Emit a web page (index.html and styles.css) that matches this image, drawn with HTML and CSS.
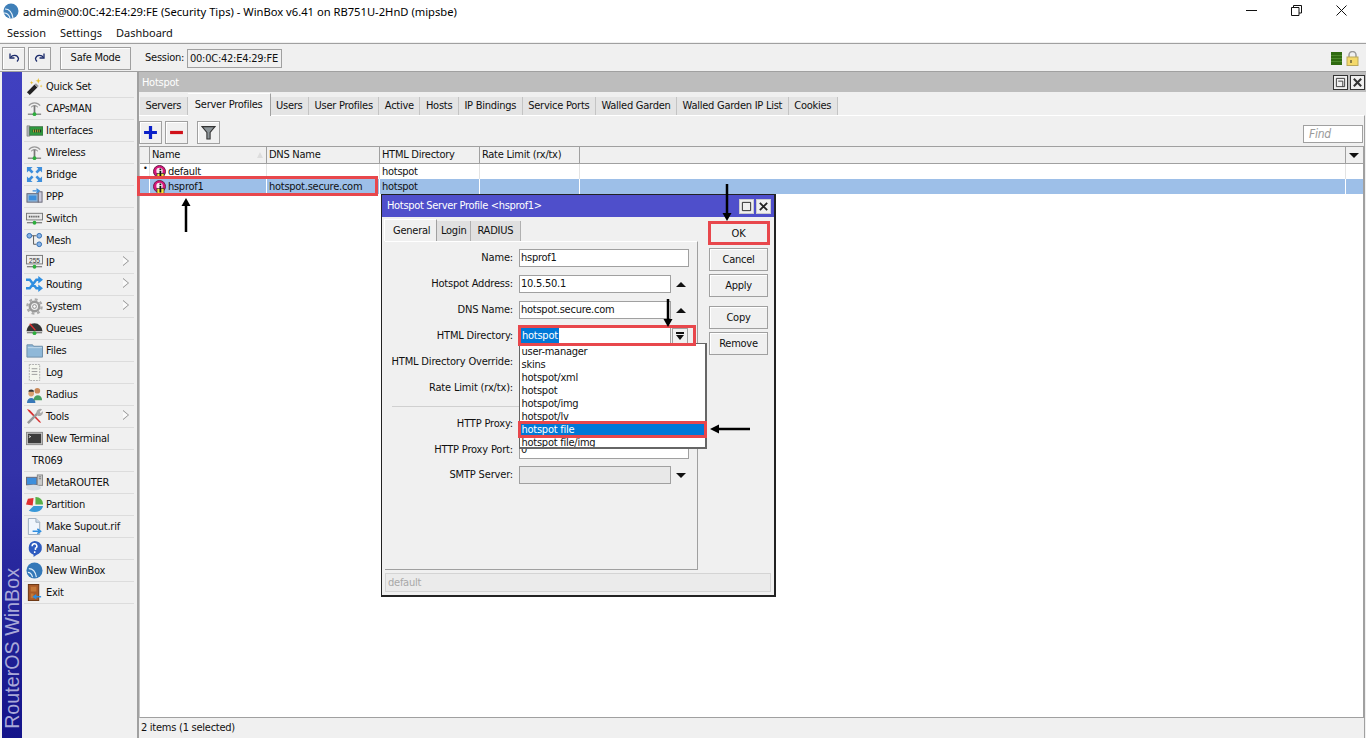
FILE: index.html
```html
<!DOCTYPE html>
<html lang="en">
<head>
<meta charset="utf-8">
<title>WinBox</title>
<link rel="stylesheet" href="styles.css">
</head>
<body>
<svg class="defs" width="0" height="0" aria-hidden="true">
  <defs>
    <symbol id="pin" viewBox="0 0 14 14">
      <circle cx="6.500" cy="6.500" r="6" fill="#d8147a" stroke="#6a2048" stroke-width="1"/>
      <circle cx="6.500" cy="6" r="3.200" fill="#fbe8f2"/>
      <rect x="4" y="8.500" width="7" height="5" fill="#f7e53a" stroke="#333" stroke-width=".7"/>
      <path d="M6.500 3.500h1.800v1.800H6.500zM6.500 6h1.800v6.500H6.500z" fill="#111"/>
    </symbol>
    <symbol id="antenna" viewBox="0 0 18 18">
      <path d="M3 6c3-4 9-4 12 0" stroke="#9a9a9a" fill="none" stroke-width="1.200"/>
      <path d="M5.500 7.500c2-2 5-2 7 0" stroke="#777" fill="none"/>
      <path d="M9 6v8" stroke="#777" stroke-width="1.800"/>
      <path d="M2 15h14" stroke="#555"/>
      <circle cx="9" cy="15" r="2" fill="#2cae3c"/>
    </symbol>
  </defs>
</svg>

<header class="titlebar">
  <svg class="app-icon" viewBox="0 0 16 16"><circle cx="8" cy="8" r="7.500" fill="#3f7fb8"/><path d="M2 6c4 0 7 3 8 9M1 10c3 0 5 2 6 5" stroke="#e8f2fa" stroke-width="1.200" fill="none"/></svg>
  <span class="title-text">admin@00:0C:42:E4:29:FE (Security Tips) - WinBox v6.41 on RB751U-2HnD (mipsbe)</span>
  <div class="win-controls">
    <svg viewBox="0 0 11 11"><path d="M0 5.500h11" stroke="#111"/></svg>
    <svg viewBox="0 0 11 11"><path d="M.5 2.500h7.500v8H.5zM2.500 2.500V.5h8v7.500H8" stroke="#111" fill="none"/></svg>
    <svg viewBox="0 0 11 11"><path d="M.5.5l10 10M10.500.5l-10 10" stroke="#111"/></svg>
  </div>
</header>

<nav class="menubar"><span>Session</span><span>Settings</span><span>Dashboard</span></nav>

<div class="toolbar">
  <button class="btn btn-icon"><svg viewBox="0 0 14 14"><path d="M3 2.500v4.500h4.500" stroke="#1a2a6a" stroke-width="1.300" fill="none"/><path d="M3.500 6.500c2-3 7-3 8 1 0 1-.5 2-1.500 3" stroke="#1a2a6a" stroke-width="1.300" fill="none"/></svg></button>
  <button class="btn btn-icon"><svg viewBox="0 0 14 14"><path d="M11 2.500v4.500H6.500" stroke="#1a2a6a" stroke-width="1.300" fill="none"/><path d="M10.500 6.500c-2-3-7-3-8 1 0 1 .5 2 1.500 3" stroke="#1a2a6a" stroke-width="1.300" fill="none"/></svg></button>
  <button class="btn btn-safe">Safe Mode</button>
  <span class="session-label">Session:</span>
  <span class="session-value">00:0C:42:E4:29:FE</span>
  <div class="status-icons">
    <svg width="11" height="13" viewBox="0 0 11 13"><rect width="11" height="13" fill="#2f6a10"/><path d="M0 3.500h11M0 6.500h11M0 9.500h11" stroke="#4c8a2c"/></svg>
    <svg width="13" height="15" viewBox="0 0 13 15"><path d="M3 7V4a3.500 3.500 0 0 1 7 0v3" stroke="#999" stroke-width="1.500" fill="none"/><rect x="1" y="6" width="11" height="8.500" fill="#f4d96a" stroke="#b9a75a"/><path d="M5 9v3" stroke="#222"/></svg>
  </div>
</div>

<main class="workspace">
  <div class="brand"><span>RouterOS WinBox</span></div>

  <aside class="sidemenu">
    <div class="mi"><svg viewBox="0 0 18 18"><path d="M1 15l8-8 3 3-8 8z" fill="#222"/><path d="M9 7l3 3 1.500-1.500-3-3z" fill="#999"/><path d="M13 0l.8 2.500L16 3l-2.200.8L13 6l-.8-2.200L10 3l2.200-.5zM6 3l.5 1.500L8 5l-1.500.5L6 7l-.5-1.500L4 5l1.500-.5zM16 7l.4 1.200 1.200.3-1.200.4L16 10l-.4-1.100-1.100-.4 1.100-.3z" fill="#e8c030"/></svg><span>Quick Set</span></div>
    <div class="mi"><svg><use href="#antenna"/></svg><span>CAPsMAN</span></div>
    <div class="mi"><svg viewBox="0 0 18 18"><path d="M1 4h3v11H1z" fill="#aab0b4" stroke="#777" stroke-width=".6"/><rect x="4" y="5" width="14" height="9" fill="#2e9a3e" stroke="#37683c" stroke-width=".8"/><path d="M7 8h9v3H7z" fill="#1c3a20"/><path d="M8 8v3M10 8v3M12 8v3M14 8v3" stroke="#e8c840" stroke-width=".8"/></svg><span>Interfaces</span></div>
    <div class="mi"><svg><use href="#antenna"/></svg><span>Wireless</span></div>
    <div class="mi"><svg viewBox="0 0 18 18"><path d="M1 1h6L5 3l3 3-2 2-3-3-2 2zM17 1v6l-2-2-3 3-2-2 3-3-2-2zM1 17v-6l2 2 3-3 2 2-3 3 2 2zM17 17h-6l2-2-3-3 2-2 3 3 2-2z" fill="#3d8edc"/></svg><span>Bridge</span></div>
    <div class="mi"><svg viewBox="0 0 18 18"><rect x="1" y="6" width="12" height="9" fill="#8db4d8" stroke="#667"/><path d="M3 8h8v5H3z" fill="#3d8edc"/><rect x="13" y="4" width="4" height="11" fill="#ccd" stroke="#667"/><path d="M7 3h6M11 .8L14 3l-3 2.200" stroke="#3d8edc" fill="none" stroke-width="1.300"/></svg><span>PPP</span></div>
    <div class="mi"><svg viewBox="0 0 18 18"><rect x=".5" y="3.500" width="17" height="7" fill="#e8e8e8" stroke="#777"/><path d="M3 7h12" stroke="#333" stroke-dasharray="1 1" stroke-width="2"/><path d="M1 13.500h16" stroke="#555"/><circle cx="9" cy="13.500" r="2" fill="#2cae3c"/></svg><span>Switch</span></div>
    <div class="mi"><svg viewBox="0 0 18 18"><path d="M6 4h5M8 4v9h3" stroke="#555" fill="none"/><circle cx="3.500" cy="4" r="2.500" fill="#8ab4e4" stroke="#2f6ab0"/><circle cx="14" cy="4" r="2.500" fill="#8ab4e4" stroke="#2f6ab0"/><circle cx="14" cy="13" r="2.500" fill="#8ab4e4" stroke="#2f6ab0"/></svg><span>Mesh</span></div>
    <div class="mi arrow"><svg viewBox="0 0 18 18"><rect x=".5" y="1.500" width="17" height="9" fill="#eee" stroke="#777"/><text class="ip-num" x="9" y="9" text-anchor="middle">255</text><path d="M1 13.500h16" stroke="#555"/><circle cx="9" cy="13.500" r="2" fill="#2cae3c"/></svg><span>IP</span></div>
    <div class="mi arrow"><svg viewBox="0 0 18 18"><path d="M0 4h4l7 9h3M0 13h4l7-9h3" stroke="#2f8ee0" stroke-width="2.600" fill="none"/><path d="M13 0l5 4-5 4zM13 9l5 4-5 4z" fill="#2f8ee0"/></svg><span>Routing</span></div>
    <div class="mi arrow"><svg viewBox="0 0 18 18"><circle cx="9" cy="9" r="5" fill="#eee" stroke="#999" stroke-width="2.500"/><circle cx="9" cy="9" r="7.500" fill="none" stroke="#aaa" stroke-width="2.500" stroke-dasharray="3 2.900"/><circle cx="9" cy="9" r="2" fill="#f8f8f8" stroke="#888"/></svg><span>System</span></div>
    <div class="mi"><svg viewBox="0 0 18 18"><path d="M.5 12a8.500 8.500 0 0 1 17 0z" fill="#333"/><path d="M4 4l6 7" stroke="#e03030" stroke-width="1.500"/><path d="M1 13.500h16" stroke="#555"/><circle cx="9" cy="14" r="2" fill="#2cae3c"/></svg><span>Queues</span></div>
    <div class="mi"><svg viewBox="0 0 18 18"><path d="M1 3h6l1 1.500h9.500V16H1z" fill="#8fb8d8" stroke="#6a8ca8"/><path d="M2 6h15" stroke="#c4dcec"/></svg><span>Files</span></div>
    <div class="mi"><svg viewBox="0 0 18 18"><rect x="3.500" y=".5" width="11" height="17" fill="#f4f6ee" stroke="#aaa" stroke-dasharray="2 1"/><path d="M6 5h6M6 8h6M6 11h6" stroke="#9a9a9a"/></svg><span>Log</span></div>
    <div class="mi"><svg viewBox="0 0 18 18"><circle cx="5.500" cy="8" r="3" fill="#d8a070"/><path d="M1 18c0-7 9-7 9 0z" fill="#3878b8"/><circle cx="12" cy="5" r="3" fill="#c88858"/><path d="M2.500 6c0-3 6-3 6 0z" fill="#333"/><path d="M8 15c0-7 9-7 9 0z" fill="#48a060"/></svg><span>Radius</span></div>
    <div class="mi arrow"><svg viewBox="0 0 18 18"><path d="M1 1l3 1 11 12 1 2-2-1L3 4z" fill="#d83030"/><path d="M2 16L13 5" stroke="#999" stroke-width="2.600"/><path d="M11 5a4 4 0 0 1 6-3.500L14.500 4l1 1.500 2.300-2A4 4 0 0 1 12 8z" fill="#aaa"/></svg><span>Tools</span></div>
    <div class="mi"><svg viewBox="0 0 18 18"><rect x=".5" y="2.500" width="17" height="13" fill="#c8c8c8" stroke="#888"/><rect x="2" y="4" width="14" height="10" fill="#3c3c3c"/><path d="M3 6l2 1-2 1" stroke="#fff" fill="none" stroke-width=".8"/></svg><span>New Terminal</span></div>
    <div class="mi mi-plain"><span>TR069</span></div>
    <div class="mi"><svg viewBox="0 0 18 18"><rect x=".5" y="3.500" width="11" height="8" fill="#3d8edc" stroke="#667"/><rect x="12" y="1" width="5.500" height="11" fill="#ccc" stroke="#888"/><path d="M13.500 3h2.500M13.500 5h2.500" stroke="#777"/><ellipse cx="8" cy="14.500" rx="8" ry="3" fill="#d8dde4"/></svg><span>MetaROUTER</span></div>
    <div class="mi"><svg viewBox="0 0 18 18"><path d="M8 2L2 3 0 9l7 1z" fill="#e03030"/><path d="M10 1a7.500 7.500 0 0 1 8 8h-8z" fill="#58b048"/><path d="M8 10.500h10c-1 6-8 8-15 5z" fill="#3898d8"/></svg><span>Partition</span></div>
    <div class="mi"><svg viewBox="0 0 18 18"><path d="M2.500.5h8l4 4v13h-12z" fill="#f0f6fc" stroke="#9ab"/><path d="M10.500.5v4h4" fill="#cde" stroke="#9ab"/><path d="M7 14h7M12 11.500l3.500 2.500-3.500 2.500" stroke="#2f8ee0" stroke-width="1.500" fill="none"/></svg><span>Make Supout.rif</span></div>
    <div class="mi"><svg viewBox="0 0 18 18"><path d="M9 1a7.500 7.500 0 0 1 2 14.800L8 18v-2.500A7.500 7.500 0 0 1 9 1z" fill="#2e5cc0"/><path d="M6.500 6.500a2.500 2.500 0 1 1 3.500 2.300V10.500M9.200 12v1.800" stroke="#fff" stroke-width="1.600" fill="none"/></svg><span>Manual</span></div>
    <div class="mi"><svg viewBox="0 0 18 18"><circle cx="9" cy="9" r="8.500" fill="#3478b8"/><path d="M3 7c4 0 7 3 8 9M2 11c3 0 4 2 5 5" stroke="#dfeefa" stroke-width="1.200" fill="none"/></svg><span>New WinBox</span></div>
    <div class="mi"><svg viewBox="0 0 18 18"><rect x="2.500" y=".5" width="11" height="17" fill="#a85a28" stroke="#6a3410"/><path d="M5 3h6v5H5zM5 10h3v5H5z" fill="#c47838"/><path d="M8 13.500h8M11 11.500l-3 2 3 2" stroke="#2f8ee0" stroke-width="1.500" fill="none"/></svg><span>Exit</span></div>
  </aside>

  <section class="panel">
    <div class="panel-title">
      <span>Hotspot</span>
      <div class="panel-controls">
        <i class="pc"><svg viewBox="0 0 12 12"><path d="M1.500 1.500h9v9h-9zM3.500 4.500h5v6" stroke="#333" fill="none"/></svg></i>
        <i class="pc"><svg viewBox="0 0 12 12"><path d="M2 2l8 8M10 2l-8 8" stroke="#333" stroke-width="2.200"/></svg></i>
      </div>
    </div>
    <div class="tabs">
      <span class="tab">Servers</span>
      <span class="tab active">Server Profiles</span>
      <span class="tab">Users</span>
      <span class="tab">User Profiles</span>
      <span class="tab">Active</span>
      <span class="tab">Hosts</span>
      <span class="tab">IP Bindings</span>
      <span class="tab">Service Ports</span>
      <span class="tab">Walled Garden</span>
      <span class="tab">Walled Garden IP List</span>
      <span class="tab">Cookies</span>
    </div>
    <div class="content">
      <div class="actions">
        <button class="btn btn-act"><svg viewBox="0 0 14 14"><path d="M7 1v12M1 7h12" stroke="#0a20c8" stroke-width="3"/></svg></button>
        <button class="btn btn-act"><svg viewBox="0 0 14 14"><path d="M1 7h12" stroke="#d01018" stroke-width="3"/></svg></button>
        <button class="btn btn-act btn-filter"><svg viewBox="0 0 14 14"><path d="M1 1.500h12L8.500 7v6h-3V7z" fill="#8c9498" stroke="#333"/></svg></button>
        <span class="find">Find</span>
      </div>
      <div class="table">
        <div class="row head">
          <span class="c0"></span>
          <span class="c1">Name<em class="sort"></em></span>
          <span class="c2">DNS Name</span>
          <span class="c3">HTML Directory</span>
          <span class="c4">Rate Limit (rx/tx)</span>
          <span class="c5"></span>
          <span class="c6"><em class="tri"></em></span>
        </div>
        <div class="row">
          <span class="c0 mark">•</span>
          <span class="c1"><svg class="pin"><use href="#pin"/></svg>default</span>
          <span class="c2"></span>
          <span class="c3">hotspot</span>
          <span class="c4"></span>
          <span class="c5"></span>
        </div>
        <div class="row selected">
          <span class="c0"></span>
          <span class="c1"><svg class="pin"><use href="#pin"/></svg>hsprof1</span>
          <span class="c2">hotspot.secure.com</span>
          <span class="c3">hotspot</span>
          <span class="c4"></span>
          <span class="c5"></span>
        </div>
      </div>
      <div class="status">2 items (1 selected)</div>
    </div>
  </section>
</main>

<section class="dialog">
  <div class="dlg-title">
    <span>Hotspot Server Profile &lt;hsprof1&gt;</span>
    <div class="dlg-controls">
      <i class="pc"><svg viewBox="0 0 12 12"><path d="M1.500 1.500h9v9h-9z" stroke="#222" fill="none"/></svg></i>
      <i class="pc"><svg viewBox="0 0 12 12"><path d="M2 2l8 8M10 2l-8 8" stroke="#222" stroke-width="2"/></svg></i>
    </div>
  </div>
  <div class="dlg-body">
    <div class="dlg-left">
      <div class="dlg-tabs">
        <span class="dtab active">General</span>
        <span class="dtab">Login</span>
        <span class="dtab">RADIUS</span>
      </div>
      <div class="form">
        <div class="frow"><label>Name:</label><span class="field wide">hsprof1</span></div>
        <div class="frow"><label>Hotspot Address:</label><span class="field">10.5.50.1</span><em class="up"></em></div>
        <div class="frow"><label>DNS Name:</label><span class="field">hotspot.secure.com</span><em class="up"></em></div>
        <div class="frow"><label>HTML Directory:</label><span class="field"><b class="sel">hotspot</b></span><span class="ddbtn"><em class="tri"></em></span></div>
        <div class="frow"><label>HTML Directory Override:</label></div>
        <div class="frow"><label>Rate Limit (rx/tx):</label></div>
        <hr class="sep">
        <div class="frow"><label>HTTP Proxy:</label></div>
        <div class="frow tight"><label>HTTP Proxy Port:</label><span class="field wide">0</span></div>
        <div class="frow"><label>SMTP Server:</label><span class="field disabled"></span><em class="down"></em></div>
      </div>
    </div>
    <div class="dlg-buttons">
      <button class="btn dbtn">OK</button>
      <button class="btn dbtn">Cancel</button>
      <button class="btn dbtn">Apply</button>
      <button class="btn dbtn gap">Copy</button>
      <button class="btn dbtn">Remove</button>
    </div>
  </div>
  <div class="dlg-status">default</div>
  <ul class="dropdown">
    <li>user-manager</li><li>skins</li><li>hotspot/xml</li><li>hotspot</li><li>hotspot/img</li><li>hotspot/lv</li><li class="hl">hotspot file</li><li>hotspot file/img</li>
  </ul>
</section>

<div class="frame f-row"></div>
<div class="frame f-ok"></div>
<div class="frame f-dir"></div>
<div class="frame f-item"></div>
<svg class="arw a-up" viewBox="0 0 10 34"><path d="M5 34V6" stroke="#000" stroke-width="2.500"/><path d="M5 0l4.500 8h-9z"/></svg>
<svg class="arw a-ok" viewBox="0 0 10 37"><path d="M5 0v30" stroke="#000" stroke-width="2.500"/><path d="M5 37L.5 29h9z"/></svg>
<svg class="arw a-dir" viewBox="0 0 10 28"><path d="M5 0v22" stroke="#000" stroke-width="2.500"/><path d="M5 28L.5 20h9z"/></svg>
<svg class="arw a-left" viewBox="0 0 40 10"><path d="M6 5h34" stroke="#000" stroke-width="2.500"/><path d="M0 5l9-4.500v9z"/></svg>
</body>
</html>
```

FILE: styles.css
```css
* { box-sizing: border-box; }
html, body { margin: 0; height: 100%; }
body {
  width: 1366px; height: 738px; overflow: hidden; position: relative;
  background: #fff; color: #111;
  font: 11px/14px "DejaVu Sans Condensed", "DejaVu Sans", sans-serif;
  font-stretch: condensed;
  letter-spacing: -.25px;
}
.defs { position: absolute; }
button { font: inherit; color: inherit; letter-spacing: inherit; }
svg { display: block; }
.ip-num { font: 7px "Liberation Sans", sans-serif; letter-spacing: 0; fill: #333; }

.titlebar { height: 22px; display: flex; align-items: center; padding-left: 3px; background: #fff; font: 11.200px "Noto Sans", sans-serif; letter-spacing: 0; color: #000; }
.app-icon { width: 16px; height: 16px; margin-right: 4px; }
.win-controls { margin-left: auto; display: flex; padding-bottom: 2px; }
.win-controls svg { width: 11px; height: 11px; margin-left: 34px; }
.win-controls svg:last-child { margin-right: 19px; }

.menubar { height: 21px; display: flex; align-items: center; gap: 14px; padding-left: 7px; background: #fff; font: 11px "Noto Sans", sans-serif; letter-spacing: 0; border-bottom: 1px solid #f0f0f0; }

.toolbar { height: 29px; display: flex; align-items: center; background: #f0f0f0; border-top: 1px solid #a0a0a0; border-bottom: 1px solid #a0a0a0; padding: 1px 0 0 2px; }
.btn { background: #f0f0f0; border: 1px solid #a0a0a0; box-shadow: inset 1px 1px 0 #fff; padding: 0; display: flex; align-items: center; justify-content: center; }
.btn-icon { width: 23px; height: 23px; margin-right: 3px; }
.btn-icon svg { width: 14px; height: 14px; }
.btn-safe { width: 71px; height: 23px; margin: 0 14px 0 6px; }
.session-label { width: 42px; flex: none; }
.session-value { border: 1px solid #a0a0a0; height: 19px; line-height: 17px; padding: 0 2px; width: 95px; white-space: nowrap; }
.status-icons { margin-left: auto; display: flex; align-items: center; gap: 4px; padding-right: 7px; }

.workspace { height: 666px; display: flex; background: #f0f0f0; padding-left: 2px; }
.brand { width: 20px; background: linear-gradient(#4040c0, #3232a8 60%, #14148a); display: flex; align-items: flex-end; justify-content: center; }
.brand span { writing-mode: vertical-rl; transform: rotate(180deg); color: #a9a9d8; font: 19.700px/20px "Liberation Sans", sans-serif; letter-spacing: 0; padding-top: 9px; white-space: nowrap; }
.sidemenu { width: 110px; margin-left: 2px; padding-top: 4px; }
.mi { height: 22px; display: flex; align-items: center; border-bottom: 1px solid #dcdcdc; position: relative; padding-left: 2px; white-space: nowrap; }
.mi svg { width: 17px; height: 17px; margin-right: 3px; flex: none; }
.mi-plain { padding-left: 8px; }
.arrow::before, .arrow::after { content: ""; position: absolute; top: 4px; border-style: solid; border-color: transparent; border-width: 5px 0 5px 6px; }
.arrow::before { right: 5px; border-left-color: #8a8a8a; }
.arrow::after { right: 6px; top: 5px; border-width: 4px 0 4px 5px; border-left-color: #fafafa; }

.panel { width: 1230px; margin-left: 3px; border-left: 2px solid #a0a0a0; display: flex; flex-direction: column; }
.panel-title { height: 20px; background: #bdbdbd; color: #fff; display: flex; align-items: center; padding: 2px 0 0 3px; flex: none; }
.panel-controls, .dlg-controls { margin-left: auto; display: flex; gap: 2px; padding-right: 1px; }
.panel-controls { margin-top: -2px; }
.pc { width: 15px; height: 15px; background: #f0f0f0; border: 1px solid #333; display: flex; align-items: center; justify-content: center; }
.pc svg { width: 11px; height: 11px; }
.tabs { height: 23px; display: flex; align-items: flex-end; padding-left: 1px; flex: none; }
.tab { height: 18px; line-height: 17px; padding: 0 5.500px; background: #e4e4e4; border-right: 1px solid #c4c4c4; white-space: nowrap; }
.tab.active { height: 23px; line-height: 21px; background: #f0f0f0; border-top: 1px solid #fff; border-right: 1px solid #a0a0a0; margin-bottom: -1px; padding: 0 7px; position: relative; }

.content { flex: 1; display: flex; flex-direction: column; border-top: 1px solid #fff; border-right: 1px solid #a0a0a0; margin-right: 1px; }
.actions { height: 30px; display: flex; align-items: center; flex: none; padding-top: 2px; }
.btn-act { width: 23px; height: 23px; margin-right: 3px; }
.btn-act svg { width: 15px; height: 15px; }
.btn-filter { margin-left: 6px; }
.find { margin: 4px 1px 0 auto; width: 60px; height: 18px; background: #fff; border: 1px solid #a0a0a0; color: #9a9a9a; font: italic 12px/16px "DejaVu Sans Condensed", "DejaVu Sans", sans-serif; padding-left: 5px; }
.table { flex: 1; background: #fff; border: 1px solid #a0a0a0; border-left: 1px solid #c8c8c8; }
.row { display: grid; grid-template-columns: 10px 117px 113px 100px 100px 766px 16px; height: 15px; line-height: 14px; }
.row > span { border-right: 1px solid #e4e4e4; padding-left: 2px; overflow: hidden; white-space: nowrap; display: flex; align-items: center; }
.head { height: 17px; background: #f0f0f0; border-bottom: 1px solid #a0a0a0; }
.head > span { border-right: 1px solid #a0a0a0; position: relative; }
.head .c6 { border-right: 0; justify-content: center; padding: 0; }
.selected { background: #9dbfe8; }
.selected > span { border-right-color: #fff; }
.row .mark { font-size: 9px; padding-left: 3px; align-items: flex-start; line-height: 9px; }
.pin { width: 14px; height: 14px; margin: 0 1px; flex: none; }
.sort { position: absolute; right: 3px; top: 5px; border-bottom: 6px solid #ddd; border-left: 3px solid transparent; border-right: 3px solid transparent; }
.tri { display: block; border-top: 5px solid #111; border-left: 5px solid transparent; border-right: 5px solid transparent; }
.status { height: 20px; flex: none; line-height: 20px; padding-left: 2px; }

.dialog { position: absolute; left: 381px; top: 194px; width: 395px; height: 403px; background: #f0f0f0; border: 2px solid #222; border-top-width: 1px; border-left-width: 1px; display: flex; flex-direction: column; }
.dlg-title { height: 22px; background: #4f4fcb; color: #fff; display: flex; align-items: center; padding-left: 5px; flex: none; letter-spacing: -.33px; }
.dlg-controls { padding-right: 3px; }
.dlg-controls .pc { border-color: #ccc; }
.dlg-body { flex: 1; display: flex; min-height: 0; }
.dlg-left { width: 317px; margin-left: 2px; display: flex; flex-direction: column; }
.dlg-tabs { height: 24px; display: flex; align-items: flex-end; flex: none; }
.dtab { height: 20px; line-height: 20px; padding: 0 4px; background: #e0e0e0; border-right: 1px solid #b0b0b0; white-space: nowrap; }
.dtab:last-child { padding: 0 7px 0 6px; }
.dtab.active { height: 22px; line-height: 22px; background: #f0f0f0; padding: 0 6px 0 8px; border-top: 1px solid #fff; border-left: 1px solid #fff; border-right: 1px solid #a0a0a0; width: 53px; }
.form { flex: 1; margin-left: 1px; padding-top: 3px; border-right: 1px solid #a0a0a0; border-bottom: 1px solid #a0a0a0; border-top: 1px solid #fff; width: 313px; position: relative; }
.frow { height: 26px; display: flex; align-items: center; }
.frow.tight { height: 25px; }
.frow label { width: 128px; text-align: right; margin-right: 6px; white-space: nowrap; flex: none; letter-spacing: -.17px; }
.field { width: 152px; height: 18px; background: #fff; border: 1px solid #a0a0a0; line-height: 16px; padding-left: 1px; white-space: nowrap; flex: none; }
.field.wide { width: 170px; }
.field.disabled { background: #e8e8e8; }
.sel { background: #0078d7; color: #fff; font-weight: normal; display: inline-block; height: 15px; line-height: 15px; padding: 0 1px; }
.up, .down { margin-left: 5px; border-left: 5px solid transparent; border-right: 5px solid transparent; display: block; }
.up { border-bottom: 5px solid #111; }
.down { border-top: 5px solid #111; }
.ddbtn { width: 16px; height: 16px; margin-left: 1px; display: flex; flex-direction: column; align-items: center; justify-content: center; border: 1px solid #a0a0a0; background: #f0f0f0; }
.ddbtn::before { content: ""; width: 8px; height: 2px; background: #111; margin-bottom: 1px; }
.ddbtn .tri { border-width: 5px 4px 0; }
.sep { border: 0; border-top: 1px solid #d0d0d0; margin: 5px 8px 4px 7px; }
.dlg-buttons { flex: 1; display: flex; flex-direction: column; gap: 3px; padding: 5px 0 0 8px; }
.dbtn { width: 59px; height: 23px; }
.dbtn.gap { margin-top: 6px; }
.dlg-status { height: 19px; margin: 3px; border: 1px solid #d4d4d4; background: #ebebeb; color: #a8a8a8; line-height: 18px; padding-left: 2px; flex: none; }

.dropdown { position: absolute; left: 137px; top: 148px; width: 188px; height: 106px; margin: 0; padding: 1px 0 0; list-style: none; background: #fff; border: 1px solid #666; border-right-width: 2px; border-bottom-width: 2px; overflow: hidden; }
.dropdown li { height: 13px; line-height: 13px; padding-left: 1.500px; }
.dropdown .hl { background: #0078d7; color: #fff; }

.frame { position: absolute; border: 3px solid #e8474c; }
.f-row { left: 137px; top: 176px; width: 241px; height: 20px; }
.f-ok { left: 708px; top: 221px; width: 62px; height: 24px; }
.f-dir { left: 518px; top: 325px; width: 178px; height: 21px; }
.f-item { left: 518px; top: 421px; width: 189px; height: 17px; }
.arw { position: absolute; fill: #000; }
.a-up { left: 181px; top: 198px; width: 10px; height: 34px; }
.a-ok { left: 722px; top: 184px; width: 10px; height: 37px; }
.a-dir { left: 663px; top: 299px; width: 10px; height: 28px; }
.a-left { left: 710px; top: 424px; width: 40px; height: 10px; }
```
